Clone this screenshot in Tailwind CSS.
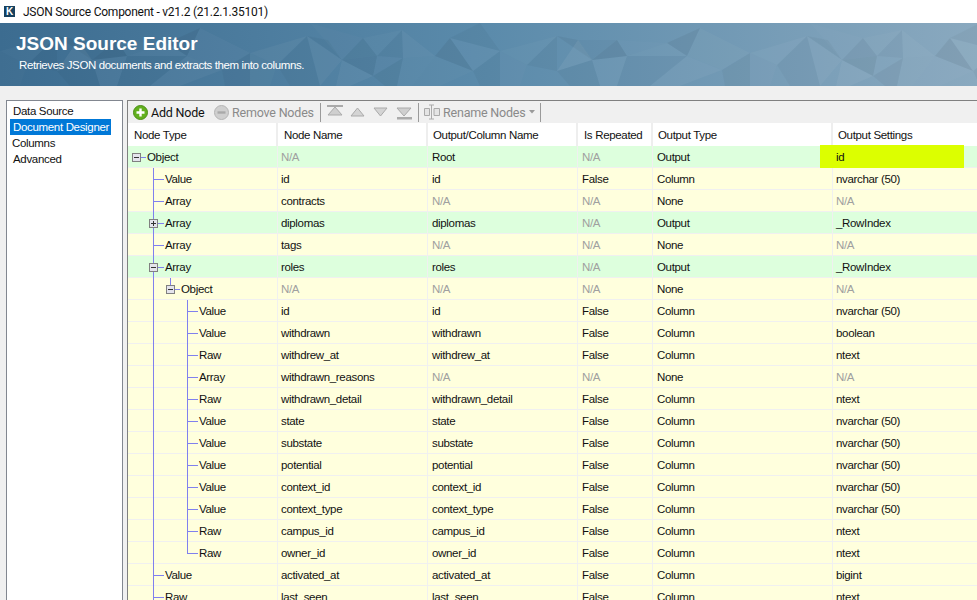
<!DOCTYPE html>
<html lang="en">
<head>
  <meta charset="UTF-8" />
  <title>JSON Source Component</title>
  <script src="https://cdn.jsdelivr.net/npm/@tailwindcss/browser@4"></script>
</head>
<body class="h-[600px] overflow-hidden bg-[#f0f0f0] font-['Liberation_Sans',sans-serif] text-[11.5px] tracking-[-0.33px] text-[#111] whitespace-nowrap">

  <!-- title bar -->
  <div class="flex h-[23px] items-center bg-white pl-[4px]">
    <div class="flex h-[11px] w-[11px] items-center justify-center bg-[#16415f] text-[10px] leading-none font-bold text-white">K</div>
    <span class="ml-[8px] font-['Roboto',sans-serif] text-[12px] tracking-[-0.25px]">JSON Source Component - v21.2 (21.2.1.35101)</span>
  </div>

  <!-- banner -->
  <div class="relative h-[63px] overflow-hidden bg-gradient-to-r from-[#3c6c90] via-[#5b8bab] to-[#8aa9bf]">
    <svg class="absolute inset-0 opacity-60" width="977" height="63">
      <defs>
        <g id="facets">
          <polygon points="342,37 363,15 377,33" fill="#000" fill-opacity=".06"/>
          <polygon points="342,37 310,0 363,15" fill="#fff" fill-opacity=".03"/>
          <polygon points="363,15 402,7 377,33" fill="#fff" fill-opacity=".05"/>
          <polygon points="402,7 435,33 403,35" fill="#fff" fill-opacity=".07"/>
          <polygon points="377,33 402,7 403,35" fill="#000" fill-opacity=".04"/>
          <polygon points="342,37 373,53 377,33" fill="#000" fill-opacity=".08"/>
          <polygon points="377,33 403,35 373,53" fill="#fff" fill-opacity=".03"/>
          <polygon points="342,37 373,53 350,63 336,63" fill="#fff" fill-opacity=".08"/>
          <polygon points="403,35 373,53 385,63 397,63" fill="#000" fill-opacity=".06"/>
          <polygon points="403,35 435,33 412,63 397,63" fill="#fff" fill-opacity=".05"/>
          <polygon points="435,33 450,15 473,48" fill="#000" fill-opacity=".09"/>
          <polygon points="435,33 473,48 440,63 412,63" fill="#fff" fill-opacity=".04"/>
          <polygon points="450,15 500,28 473,48" fill="#fff" fill-opacity=".06"/>
          <polygon points="450,15 480,0 500,28" fill="#000" fill-opacity=".05"/>
          <polygon points="473,48 500,28 500,63 480,63" fill="#000" fill-opacity=".05"/>
          <polygon points="500,28 527,42 520,63 500,63" fill="#fff" fill-opacity=".03"/>
          <polygon points="500,28 557,13 527,42" fill="#fff" fill-opacity=".05"/>
          <polygon points="527,42 557,13 557,48" fill="#000" fill-opacity=".05"/>
          <polygon points="557,13 578,17 592,37" fill="#000" fill-opacity=".07"/>
          <polygon points="578,17 592,37 557,48" fill="#fff" fill-opacity=".1"/>
          <polygon points="578,17 617,17 592,37" fill="#000" fill-opacity=".03"/>
          <polygon points="617,17 627,33 592,37" fill="#000" fill-opacity=".1"/>
          <polygon points="592,37 627,33 617,63 600,63" fill="#fff" fill-opacity=".07"/>
          <polygon points="592,37 557,48 570,63 600,63" fill="#000" fill-opacity=".05"/>
          <polygon points="627,33 667,20 687,33" fill="#fff" fill-opacity=".06"/>
          <polygon points="617,17 667,20 627,33" fill="#fff" fill-opacity=".03"/>
          <polygon points="627,33 687,33 650,63 617,63" fill="#000" fill-opacity=".03"/>
          <polygon points="687,33 722,47 680,63 650,63" fill="#fff" fill-opacity=".07"/>
          <polygon points="667,20 700,5 687,33" fill="#000" fill-opacity=".08"/>
          <polygon points="700,5 750,30 722,47 687,33" fill="#fff" fill-opacity=".05"/>
          <polygon points="722,47 750,30 750,63 725,63" fill="#000" fill-opacity=".05"/>
          <polygon points="750,30 777,42 770,63 750,63" fill="#fff" fill-opacity=".04"/>
          <polygon points="750,30 807,13 777,42" fill="#fff" fill-opacity=".07"/>
          <polygon points="777,42 807,13 820,63 790,63" fill="#000" fill-opacity=".04"/>
          <polygon points="807,13 828,17 842,37" fill="#000" fill-opacity=".05"/>
          <polygon points="807,13 842,37 820,63" fill="#fff" fill-opacity=".07"/>
        </g>
      </defs>
      <use href="#facets" x="-500"/>
      <use href="#facets"/>
      <use href="#facets" x="500"/>
    </svg>
    <div class="relative pl-[16px] pt-[9px] text-[19px] leading-[24px] font-bold tracking-normal text-white">JSON Source Editor</div>
    <div class="relative pl-[19px] pt-[1px] text-[11.5px] leading-[16px] tracking-[-0.4px] text-white">Retrieves JSON documents and extracts them into columns.</div>
  </div>

  <!-- main -->
  <div class="flex gap-[4px] pl-[6px] pt-[14px]">

    <div class="h-[520px] w-[117px] shrink-0 border border-[#828790] bg-white pl-[3px] pt-[2px] leading-[16px]">
      <div class="pl-[3px]">Data Source</div>
      <div class="w-[101px] bg-[#0078d7] pl-[3px] text-white">Document Designer</div>
      <div class="pl-[2px]">Columns</div>
      <div class="pl-[3px]">Advanced</div>
    </div>

    <div class="w-[850px] shrink-0 border-t border-l border-[#808080]">

      <!-- toolbar -->
      <div class="flex h-[22px] items-center pl-[5px] font-['Roboto',sans-serif] text-[12.5px] tracking-[-0.2px]">
        <svg width="15" height="15" viewBox="0 0 15 15"><circle cx="7.5" cy="7.5" r="7" fill="#62b01e" stroke="#4b8f16"/><path d="M7.5 3.5v8M3.5 7.5h8" stroke="#fff" stroke-width="2.4"/></svg>
        <span class="ml-[3px] w-[63px] pt-[2px]">Add Node</span>
        <svg width="15" height="15" viewBox="0 0 15 15"><circle cx="7.5" cy="7.5" r="7" fill="#cfcfcf" stroke="#b4b4b4"/><path d="M3.5 7.5h8" stroke="#a9a9a9" stroke-width="2.4"/></svg>
        <span class="ml-[3px] w-[88px] pt-[2px] text-[#8a8a8a]">Remove Nodes</span>
        <div class="h-[19px] w-px bg-[#9a9a9a]"></div>
        <svg class="ml-[6px]" width="17" height="16" viewBox="0 0 17 16"><path d="M0 1h16v2H0z" fill="#aaa"/><path d="M8 3l7 8H1z" fill="#cfcfcf" stroke="#aaa"/></svg>
        <svg class="ml-[6px]" width="15" height="10" viewBox="0 0 15 10"><path d="M7.5 1l6.5 8H1z" fill="#d4d4d4" stroke="#aaa"/></svg>
        <svg class="ml-[8px]" width="15" height="10" viewBox="0 0 15 10"><path d="M7.5 9L14 1H1z" fill="#d4d4d4" stroke="#aaa"/></svg>
        <svg class="ml-[8px]" width="17" height="16" viewBox="0 0 17 16"><path d="M8 12l7-8H1z" fill="#cfcfcf" stroke="#aaa"/><path d="M1 13h15v2.500H1z" fill="#aaa"/></svg>
        <div class="ml-[5px] h-[19px] w-px bg-[#9a9a9a]"></div>
        <svg class="ml-[5px]" width="16" height="16" viewBox="0 0 16 16"><path d="M.5 4.500h5v7h-5zM10 4.500h5.500v7H10z" fill="#e4e4e4" stroke="#aaa"/><path d="M7.500 1v14M5 1h5M5 15h5" fill="none" stroke="#aaa"/></svg>
        <span class="ml-[3px] pt-[2px] text-[#8a8a8a]">Rename Nodes</span>
        <svg class="ml-[3px]" width="6" height="4" viewBox="0 0 6 4"><path d="M0 0h6L3 3.500z" fill="#999"/></svg>
        <div class="ml-[5px] h-[19px] w-px bg-[#9a9a9a]"></div>
      </div>

      <!-- header -->
      <div class="grid h-[23px] grid-cols-[150px_150px_150px_75px_180px_144px] bg-white leading-[25px]">
        <div class="h-[23px] border-r-2 border-[#eee] pl-[6px]">Node Type</div>
        <div class="h-[23px] border-r-2 border-[#eee] pl-[6px]">Node Name</div>
        <div class="h-[23px] border-r-2 border-[#eee] pl-[5px]">Output/Column Name</div>
        <div class="h-[23px] border-r-2 border-[#eee] pl-[6px]">Is Repeated</div>
        <div class="h-[23px] border-r-2 border-[#eee] pl-[5px]">Output Type</div>
        <div class="pl-[5px]">Output Settings</div>
      </div>

      <!-- rows -->
      <div class="grid h-[22px] grid-cols-[150px_150px_150px_75px_180px_144px] border-b border-[#f0f0f0] bg-[#ddffdd] leading-[23px]">
        <div class="relative border-r border-[#f0f0f0] pl-[19px]"><svg class="absolute top-0 left-0" width="150" height="22"><path d="M12 11.500h6" stroke="#8080ee"/><rect x="4.500" y="7.500" width="8" height="8" fill="#e4e4ec" stroke="#808080"/><path d="M6 11.500h5" stroke="#333"/></svg>Object</div>
        <div class="border-r border-[#f0f0f0] pl-[3px] text-[#a0a0a0]">N/A</div>
        <div class="border-r border-[#f0f0f0] pl-[4px]">Root</div>
        <div class="border-r border-[#f0f0f0] pl-[4px] text-[#a0a0a0]">N/A</div>
        <div class="border-r border-[#f0f0f0] pl-[4px]">Output</div>
        <div class="relative pl-[3px]"><div class="absolute top-[-1px] left-[-13px] h-[23px] w-[144px] bg-[#dcff00] pl-[16px] leading-[25px]">id</div></div>
      </div>

      <div class="grid h-[22px] grid-cols-[150px_150px_150px_75px_180px_144px] border-b border-[#f0f0f0] bg-[#ffffdd] leading-[23px]">
        <div class="relative border-r border-[#f0f0f0] pl-[37px]"><svg class="absolute top-0 left-0" width="150" height="22"><path d="M25.500 0v22M25 11.500h11" fill="none" stroke="#8080ee"/></svg>Value</div>
        <div class="border-r border-[#f0f0f0] pl-[3px]">id</div>
        <div class="border-r border-[#f0f0f0] pl-[4px]">id</div>
        <div class="border-r border-[#f0f0f0] pl-[4px]">False</div>
        <div class="border-r border-[#f0f0f0] pl-[4px]">Column</div>
        <div class="pl-[3px]">nvarchar (50)</div>
      </div>

      <div class="grid h-[22px] grid-cols-[150px_150px_150px_75px_180px_144px] border-b border-[#f0f0f0] bg-[#ffffdd] leading-[23px]">
        <div class="relative border-r border-[#f0f0f0] pl-[37px]"><svg class="absolute top-0 left-0" width="150" height="22"><path d="M25.500 0v22M25 11.500h11" fill="none" stroke="#8080ee"/></svg>Array</div>
        <div class="border-r border-[#f0f0f0] pl-[3px]">contracts</div>
        <div class="border-r border-[#f0f0f0] pl-[4px] text-[#a0a0a0]">N/A</div>
        <div class="border-r border-[#f0f0f0] pl-[4px] text-[#a0a0a0]">N/A</div>
        <div class="border-r border-[#f0f0f0] pl-[4px]">None</div>
        <div class="pl-[3px] text-[#a0a0a0]">N/A</div>
      </div>

      <div class="grid h-[22px] grid-cols-[150px_150px_150px_75px_180px_144px] border-b border-[#f0f0f0] bg-[#ddffdd] leading-[23px]">
        <div class="relative border-r border-[#f0f0f0] pl-[37px]"><svg class="absolute top-0 left-0" width="150" height="22"><path d="M25.500 0v22M29 11.500h7" fill="none" stroke="#8080ee"/><rect x="21.500" y="7.500" width="8" height="8" fill="#e4e4ec" stroke="#808080"/><path d="M23 11.500h5M25.500 9v5" stroke="#333"/></svg>Array</div>
        <div class="border-r border-[#f0f0f0] pl-[3px]">diplomas</div>
        <div class="border-r border-[#f0f0f0] pl-[4px]">diplomas</div>
        <div class="border-r border-[#f0f0f0] pl-[4px] text-[#a0a0a0]">N/A</div>
        <div class="border-r border-[#f0f0f0] pl-[4px]">Output</div>
        <div class="pl-[3px]">_RowIndex</div>
      </div>

      <div class="grid h-[22px] grid-cols-[150px_150px_150px_75px_180px_144px] border-b border-[#f0f0f0] bg-[#ffffdd] leading-[23px]">
        <div class="relative border-r border-[#f0f0f0] pl-[37px]"><svg class="absolute top-0 left-0" width="150" height="22"><path d="M25.500 0v22M25 11.500h11" fill="none" stroke="#8080ee"/></svg>Array</div>
        <div class="border-r border-[#f0f0f0] pl-[3px]">tags</div>
        <div class="border-r border-[#f0f0f0] pl-[4px] text-[#a0a0a0]">N/A</div>
        <div class="border-r border-[#f0f0f0] pl-[4px] text-[#a0a0a0]">N/A</div>
        <div class="border-r border-[#f0f0f0] pl-[4px]">None</div>
        <div class="pl-[3px] text-[#a0a0a0]">N/A</div>
      </div>

      <div class="grid h-[22px] grid-cols-[150px_150px_150px_75px_180px_144px] border-b border-[#f0f0f0] bg-[#ddffdd] leading-[23px]">
        <div class="relative border-r border-[#f0f0f0] pl-[37px]"><svg class="absolute top-0 left-0" width="150" height="22"><path d="M25.500 0v22M29 11.500h7" fill="none" stroke="#8080ee"/><rect x="21.500" y="7.500" width="8" height="8" fill="#e4e4ec" stroke="#808080"/><path d="M23 11.500h5" stroke="#333"/></svg>Array</div>
        <div class="border-r border-[#f0f0f0] pl-[3px]">roles</div>
        <div class="border-r border-[#f0f0f0] pl-[4px]">roles</div>
        <div class="border-r border-[#f0f0f0] pl-[4px] text-[#a0a0a0]">N/A</div>
        <div class="border-r border-[#f0f0f0] pl-[4px]">Output</div>
        <div class="pl-[3px]">_RowIndex</div>
      </div>

      <div class="grid h-[22px] grid-cols-[150px_150px_150px_75px_180px_144px] border-b border-[#f0f0f0] bg-[#ffffdd] leading-[23px]">
        <div class="relative border-r border-[#f0f0f0] pl-[53px]"><svg class="absolute top-0 left-0" width="150" height="22"><path d="M25.500 0v22M42.500 0v7M46 11.500h6" fill="none" stroke="#8080ee"/><rect x="38.500" y="7.500" width="8" height="8" fill="#e4e4ec" stroke="#808080"/><path d="M40 11.500h5" stroke="#333"/></svg>Object</div>
        <div class="border-r border-[#f0f0f0] pl-[3px] text-[#a0a0a0]">N/A</div>
        <div class="border-r border-[#f0f0f0] pl-[4px] text-[#a0a0a0]">N/A</div>
        <div class="border-r border-[#f0f0f0] pl-[4px] text-[#a0a0a0]">N/A</div>
        <div class="border-r border-[#f0f0f0] pl-[4px]">None</div>
        <div class="pl-[3px] text-[#a0a0a0]">N/A</div>
      </div>

      <div class="grid h-[22px] grid-cols-[150px_150px_150px_75px_180px_144px] border-b border-[#f0f0f0] bg-[#ffffdd] leading-[23px]">
        <div class="relative border-r border-[#f0f0f0] pl-[71px]"><svg class="absolute top-0 left-0" width="150" height="22"><path d="M25.500 0v22M59.500 0v22M59 11.500h11" fill="none" stroke="#8080ee"/></svg>Value</div>
        <div class="border-r border-[#f0f0f0] pl-[3px]">id</div>
        <div class="border-r border-[#f0f0f0] pl-[4px]">id</div>
        <div class="border-r border-[#f0f0f0] pl-[4px]">False</div>
        <div class="border-r border-[#f0f0f0] pl-[4px]">Column</div>
        <div class="pl-[3px]">nvarchar (50)</div>
      </div>

      <div class="grid h-[22px] grid-cols-[150px_150px_150px_75px_180px_144px] border-b border-[#f0f0f0] bg-[#ffffdd] leading-[23px]">
        <div class="relative border-r border-[#f0f0f0] pl-[71px]"><svg class="absolute top-0 left-0" width="150" height="22"><path d="M25.500 0v22M59.500 0v22M59 11.500h11" fill="none" stroke="#8080ee"/></svg>Value</div>
        <div class="border-r border-[#f0f0f0] pl-[3px]">withdrawn</div>
        <div class="border-r border-[#f0f0f0] pl-[4px]">withdrawn</div>
        <div class="border-r border-[#f0f0f0] pl-[4px]">False</div>
        <div class="border-r border-[#f0f0f0] pl-[4px]">Column</div>
        <div class="pl-[3px]">boolean</div>
      </div>

      <div class="grid h-[22px] grid-cols-[150px_150px_150px_75px_180px_144px] border-b border-[#f0f0f0] bg-[#ffffdd] leading-[23px]">
        <div class="relative border-r border-[#f0f0f0] pl-[71px]"><svg class="absolute top-0 left-0" width="150" height="22"><path d="M25.500 0v22M59.500 0v22M59 11.500h11" fill="none" stroke="#8080ee"/></svg>Raw</div>
        <div class="border-r border-[#f0f0f0] pl-[3px]">withdrew_at</div>
        <div class="border-r border-[#f0f0f0] pl-[4px]">withdrew_at</div>
        <div class="border-r border-[#f0f0f0] pl-[4px]">False</div>
        <div class="border-r border-[#f0f0f0] pl-[4px]">Column</div>
        <div class="pl-[3px]">ntext</div>
      </div>

      <div class="grid h-[22px] grid-cols-[150px_150px_150px_75px_180px_144px] border-b border-[#f0f0f0] bg-[#ffffdd] leading-[23px]">
        <div class="relative border-r border-[#f0f0f0] pl-[71px]"><svg class="absolute top-0 left-0" width="150" height="22"><path d="M25.500 0v22M59.500 0v22M59 11.500h11" fill="none" stroke="#8080ee"/></svg>Array</div>
        <div class="border-r border-[#f0f0f0] pl-[3px]">withdrawn_reasons</div>
        <div class="border-r border-[#f0f0f0] pl-[4px] text-[#a0a0a0]">N/A</div>
        <div class="border-r border-[#f0f0f0] pl-[4px] text-[#a0a0a0]">N/A</div>
        <div class="border-r border-[#f0f0f0] pl-[4px]">None</div>
        <div class="pl-[3px] text-[#a0a0a0]">N/A</div>
      </div>

      <div class="grid h-[22px] grid-cols-[150px_150px_150px_75px_180px_144px] border-b border-[#f0f0f0] bg-[#ffffdd] leading-[23px]">
        <div class="relative border-r border-[#f0f0f0] pl-[71px]"><svg class="absolute top-0 left-0" width="150" height="22"><path d="M25.500 0v22M59.500 0v22M59 11.500h11" fill="none" stroke="#8080ee"/></svg>Raw</div>
        <div class="border-r border-[#f0f0f0] pl-[3px]">withdrawn_detail</div>
        <div class="border-r border-[#f0f0f0] pl-[4px]">withdrawn_detail</div>
        <div class="border-r border-[#f0f0f0] pl-[4px]">False</div>
        <div class="border-r border-[#f0f0f0] pl-[4px]">Column</div>
        <div class="pl-[3px]">ntext</div>
      </div>

      <div class="grid h-[22px] grid-cols-[150px_150px_150px_75px_180px_144px] border-b border-[#f0f0f0] bg-[#ffffdd] leading-[23px]">
        <div class="relative border-r border-[#f0f0f0] pl-[71px]"><svg class="absolute top-0 left-0" width="150" height="22"><path d="M25.500 0v22M59.500 0v22M59 11.500h11" fill="none" stroke="#8080ee"/></svg>Value</div>
        <div class="border-r border-[#f0f0f0] pl-[3px]">state</div>
        <div class="border-r border-[#f0f0f0] pl-[4px]">state</div>
        <div class="border-r border-[#f0f0f0] pl-[4px]">False</div>
        <div class="border-r border-[#f0f0f0] pl-[4px]">Column</div>
        <div class="pl-[3px]">nvarchar (50)</div>
      </div>

      <div class="grid h-[22px] grid-cols-[150px_150px_150px_75px_180px_144px] border-b border-[#f0f0f0] bg-[#ffffdd] leading-[23px]">
        <div class="relative border-r border-[#f0f0f0] pl-[71px]"><svg class="absolute top-0 left-0" width="150" height="22"><path d="M25.500 0v22M59.500 0v22M59 11.500h11" fill="none" stroke="#8080ee"/></svg>Value</div>
        <div class="border-r border-[#f0f0f0] pl-[3px]">substate</div>
        <div class="border-r border-[#f0f0f0] pl-[4px]">substate</div>
        <div class="border-r border-[#f0f0f0] pl-[4px]">False</div>
        <div class="border-r border-[#f0f0f0] pl-[4px]">Column</div>
        <div class="pl-[3px]">nvarchar (50)</div>
      </div>

      <div class="grid h-[22px] grid-cols-[150px_150px_150px_75px_180px_144px] border-b border-[#f0f0f0] bg-[#ffffdd] leading-[23px]">
        <div class="relative border-r border-[#f0f0f0] pl-[71px]"><svg class="absolute top-0 left-0" width="150" height="22"><path d="M25.500 0v22M59.500 0v22M59 11.500h11" fill="none" stroke="#8080ee"/></svg>Value</div>
        <div class="border-r border-[#f0f0f0] pl-[3px]">potential</div>
        <div class="border-r border-[#f0f0f0] pl-[4px]">potential</div>
        <div class="border-r border-[#f0f0f0] pl-[4px]">False</div>
        <div class="border-r border-[#f0f0f0] pl-[4px]">Column</div>
        <div class="pl-[3px]">nvarchar (50)</div>
      </div>

      <div class="grid h-[22px] grid-cols-[150px_150px_150px_75px_180px_144px] border-b border-[#f0f0f0] bg-[#ffffdd] leading-[23px]">
        <div class="relative border-r border-[#f0f0f0] pl-[71px]"><svg class="absolute top-0 left-0" width="150" height="22"><path d="M25.500 0v22M59.500 0v22M59 11.500h11" fill="none" stroke="#8080ee"/></svg>Value</div>
        <div class="border-r border-[#f0f0f0] pl-[3px]">context_id</div>
        <div class="border-r border-[#f0f0f0] pl-[4px]">context_id</div>
        <div class="border-r border-[#f0f0f0] pl-[4px]">False</div>
        <div class="border-r border-[#f0f0f0] pl-[4px]">Column</div>
        <div class="pl-[3px]">nvarchar (50)</div>
      </div>

      <div class="grid h-[22px] grid-cols-[150px_150px_150px_75px_180px_144px] border-b border-[#f0f0f0] bg-[#ffffdd] leading-[23px]">
        <div class="relative border-r border-[#f0f0f0] pl-[71px]"><svg class="absolute top-0 left-0" width="150" height="22"><path d="M25.500 0v22M59.500 0v22M59 11.500h11" fill="none" stroke="#8080ee"/></svg>Value</div>
        <div class="border-r border-[#f0f0f0] pl-[3px]">context_type</div>
        <div class="border-r border-[#f0f0f0] pl-[4px]">context_type</div>
        <div class="border-r border-[#f0f0f0] pl-[4px]">False</div>
        <div class="border-r border-[#f0f0f0] pl-[4px]">Column</div>
        <div class="pl-[3px]">nvarchar (50)</div>
      </div>

      <div class="grid h-[22px] grid-cols-[150px_150px_150px_75px_180px_144px] border-b border-[#f0f0f0] bg-[#ffffdd] leading-[23px]">
        <div class="relative border-r border-[#f0f0f0] pl-[71px]"><svg class="absolute top-0 left-0" width="150" height="22"><path d="M25.500 0v22M59.500 0v22M59 11.500h11" fill="none" stroke="#8080ee"/></svg>Raw</div>
        <div class="border-r border-[#f0f0f0] pl-[3px]">campus_id</div>
        <div class="border-r border-[#f0f0f0] pl-[4px]">campus_id</div>
        <div class="border-r border-[#f0f0f0] pl-[4px]">False</div>
        <div class="border-r border-[#f0f0f0] pl-[4px]">Column</div>
        <div class="pl-[3px]">ntext</div>
      </div>

      <div class="grid h-[22px] grid-cols-[150px_150px_150px_75px_180px_144px] border-b border-[#f0f0f0] bg-[#ffffdd] leading-[23px]">
        <div class="relative border-r border-[#f0f0f0] pl-[71px]"><svg class="absolute top-0 left-0" width="150" height="22"><path d="M25.500 0v22M59.500 0v11.500M59 11.500h11" fill="none" stroke="#8080ee"/></svg>Raw</div>
        <div class="border-r border-[#f0f0f0] pl-[3px]">owner_id</div>
        <div class="border-r border-[#f0f0f0] pl-[4px]">owner_id</div>
        <div class="border-r border-[#f0f0f0] pl-[4px]">False</div>
        <div class="border-r border-[#f0f0f0] pl-[4px]">Column</div>
        <div class="pl-[3px]">ntext</div>
      </div>

      <div class="grid h-[22px] grid-cols-[150px_150px_150px_75px_180px_144px] border-b border-[#f0f0f0] bg-[#ffffdd] leading-[23px]">
        <div class="relative border-r border-[#f0f0f0] pl-[37px]"><svg class="absolute top-0 left-0" width="150" height="22"><path d="M25.500 0v22M25 11.500h11" fill="none" stroke="#8080ee"/></svg>Value</div>
        <div class="border-r border-[#f0f0f0] pl-[3px]">activated_at</div>
        <div class="border-r border-[#f0f0f0] pl-[4px]">activated_at</div>
        <div class="border-r border-[#f0f0f0] pl-[4px]">False</div>
        <div class="border-r border-[#f0f0f0] pl-[4px]">Column</div>
        <div class="pl-[3px]">bigint</div>
      </div>

      <div class="grid h-[22px] grid-cols-[150px_150px_150px_75px_180px_144px] border-b border-[#f0f0f0] bg-[#ffffdd] leading-[23px]">
        <div class="relative border-r border-[#f0f0f0] pl-[37px]"><svg class="absolute top-0 left-0" width="150" height="22"><path d="M25.500 0v22M25 11.500h11" fill="none" stroke="#8080ee"/></svg>Raw</div>
        <div class="border-r border-[#f0f0f0] pl-[3px]">last_seen</div>
        <div class="border-r border-[#f0f0f0] pl-[4px]">last_seen</div>
        <div class="border-r border-[#f0f0f0] pl-[4px]">False</div>
        <div class="border-r border-[#f0f0f0] pl-[4px]">Column</div>
        <div class="pl-[3px]">ntext</div>
      </div>

    </div>
  </div>
</body>
</html>
